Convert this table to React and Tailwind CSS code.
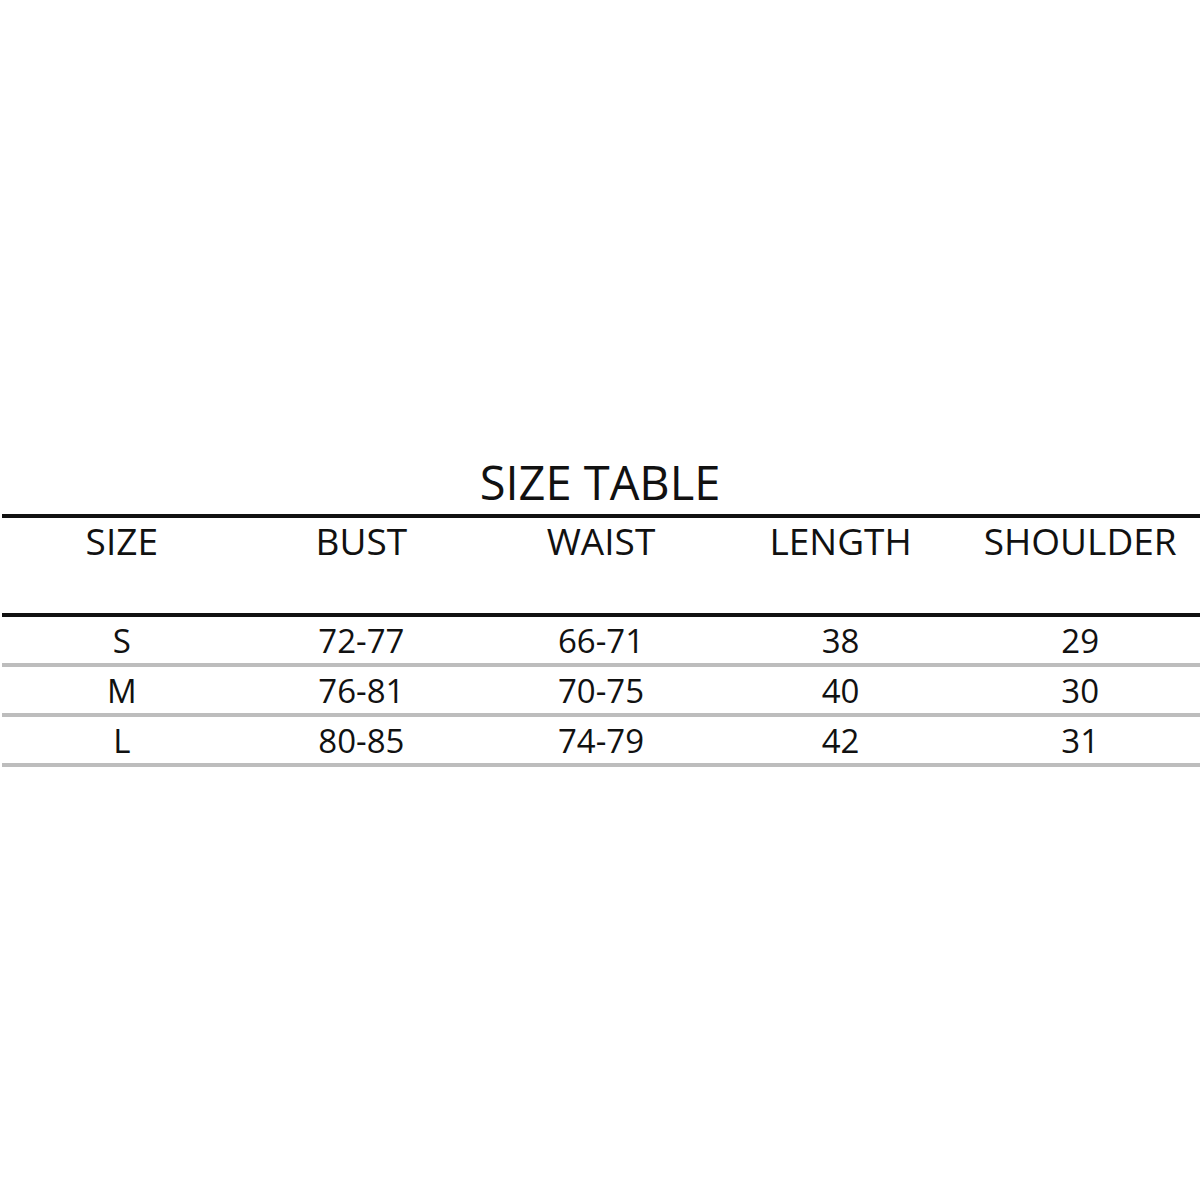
const headers = ["SIZE", "BUST", "WAIST", "LENGTH", "SHOULDER"];

const rows = [
  ["S", "72-77", "66-71", "38", "29"],
  ["M", "76-81", "70-75", "40", "30"],
  ["L", "80-85", "74-79", "42", "31"],
];

export default function App() {
  return (
    <div className="min-h-[1200px] w-[1200px] bg-white pt-[459px] font-['Open_Sans',sans-serif] text-[#111]">
      <h1 className="text-center text-[47px] leading-[46px] font-normal">SIZE TABLE</h1>

      <div className="ml-[2px] mt-[9px] border-t-4 border-[#111]">
        <div className="grid h-[99px] grid-cols-5 border-b-4 border-[#111] pt-[4px]">
          {headers.map((h) => (
            <div key={h} className="text-center text-[37px] leading-[37px]">
              {h}
            </div>
          ))}
        </div>

        {rows.map((row) => (
          <div
            key={row[0]}
            className="grid h-[50px] grid-cols-5 items-center border-b-4 border-[#bdbdbd]"
          >
            {row.map((cell, i) => (
              <div key={i} className="text-center text-[33px] leading-[33px]">
                {cell}
              </div>
            ))}
          </div>
        ))}
      </div>
    </div>
  );
}
